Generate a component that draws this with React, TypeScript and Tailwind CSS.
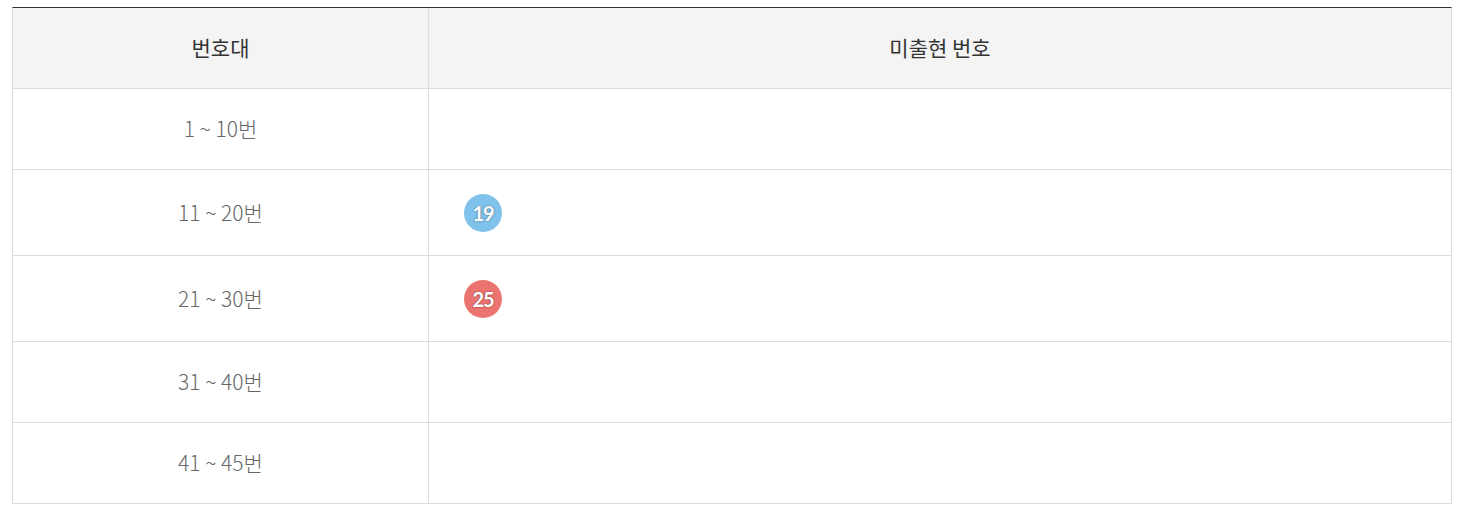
import React from "react";

type Row = { range: string; balls: number[] };

const rows: Row[] = [
  { range: "1 ~ 10번", balls: [] },
  { range: "11 ~ 20번", balls: [19] },
  { range: "21 ~ 30번", balls: [25] },
  { range: "31 ~ 40번", balls: [] },
  { range: "41 ~ 45번", balls: [] },
];

const ballColor = (n: number) => {
  if (n <= 10) return "bg-[#fbc400]";
  if (n <= 20) return "bg-[#7fc3ec]";
  if (n <= 30) return "bg-[#ec7470]";
  if (n <= 40) return "bg-[#aaaaaa]";
  return "bg-[#b0d840]";
};

const Ball = ({ n }: { n: number }) => (
  <span
    className={`flex h-[38px] w-[38px] items-center justify-center rounded-full text-[20px] font-bold tracking-[-1px] text-white [text-shadow:0_0_2px_rgba(0,0,0,0.5)] ${ballColor(n)}`}
    style={{ fontFamily: "Lato, 'Noto Sans', sans-serif" }}
  >
    {n}
  </span>
);

export default function App() {
  return (
    <div
      className="bg-white pt-[7px] pl-[12px]"
      style={{ fontFamily: "'Noto Sans CJK KR', 'Noto Sans', sans-serif" }}
    >
      <div className="w-[1440px] border-t border-t-[#333] border-x border-x-[#ddd]">
        <div className="flex h-[81px] border-b border-[#ddd] bg-[#f4f4f4] text-[21px] text-[#333]">
          <div className="flex w-[416px] items-center justify-center border-r border-[#ddd]">
            번호대
          </div>
          <div className="flex flex-1 items-center justify-center">미출현 번호</div>
        </div>
        {rows.map((row) => (
          <div
            key={row.range}
            className={`flex border-b border-[#ddd] ${row.balls.length ? "h-[86px]" : "h-[81px]"}`}
          >
            <div className="flex w-[416px] items-center justify-center border-r border-[#ddd] text-[21px] font-light text-[#666]">
              {row.range}
            </div>
            <div className="flex flex-1 items-center gap-2 pl-[35px]">
              {row.balls.map((b) => (
                <Ball key={b} n={b} />
              ))}
            </div>
          </div>
        ))}
      </div>
    </div>
  );
}
